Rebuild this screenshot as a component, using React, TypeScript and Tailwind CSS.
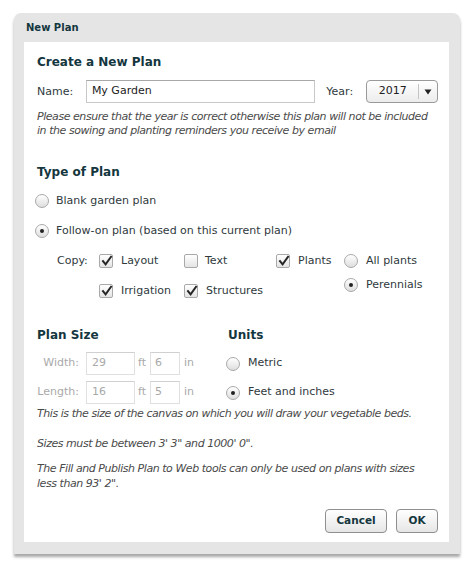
import React from "react";

const font = { fontFamily: '"DejaVu Sans", Verdana, sans-serif' };

function Check({ checked }: { checked?: boolean }) {
  return (
    <span className="relative inline-block w-[14px] h-[14px] shrink-0 rounded-[2px] border border-[#a9a9a9] bg-gradient-to-b from-[#ffffff] to-[#e4e4e4]">
      {checked && (
        <svg viewBox="0 0 14 14" className="absolute left-[0px] top-[-1px] w-[14px] h-[14px]">
          <path d="M3 7.2 L5.6 10.4 L11 2.8" fill="none" stroke="#262626" strokeWidth="2" strokeLinecap="square" />
        </svg>
      )}
    </span>
  );
}

function Radio({ checked }: { checked?: boolean }) {
  return (
    <span className="relative inline-flex items-center justify-center w-[14px] h-[14px] shrink-0 rounded-full border border-[#a9a9a9] bg-gradient-to-b from-[#ffffff] to-[#dedede]">
      {checked && <span className="block w-[4px] h-[4px] rounded-full bg-[#222]" />}
    </span>
  );
}

export default function App() {
  return (
    <div className="w-[471px] h-[569px] bg-white text-[11px] text-[#303a3d]" style={font}>
      <div className="pt-[13px] pl-[14px]">
        <div className="w-[446px] bg-[#e5e5e5] rounded-t-[7px] shadow-[0_3px_3px_rgba(0,0,0,0.35)] pb-[12px]">
          <div className="h-[29px] pl-[12px] flex items-center font-bold text-[10px] text-[#14363e]">New Plan</div>
          <div className="ml-[10px] w-[425px] bg-white pl-[13px] pr-[11px] pt-[10px] pb-[9px]">
            <div className="h-[20px] flex items-center font-bold text-[12px] text-[#14363e]">Create a New Plan</div>
            <div className="mt-[8px] h-[23px] flex items-center">
              <span className="w-[49px] pt-[2px]">Name:</span>
              <div className="w-[230px] h-[23px] border border-[#c8c8c8] border-t-[#a8a8a8] px-[5px] flex items-center text-[#222]">My Garden</div>
              <span className="ml-[11px] w-[40px] pt-[2px]">Year:</span>
              <div className="w-[72px] h-[23px] rounded-[4px] border border-[#9a9a9a] bg-gradient-to-b from-[#ffffff] to-[#ececec] flex items-center">
                <span className="w-[51px] text-center text-[#222]">2017</span>
                <span className="h-[15px] w-px bg-[#c4c4c4]" />
                <span className="flex-1 flex justify-center">
                  <svg width="8" height="6" viewBox="0 0 8 6"><path d="M0.5 0.5 L7.5 0.5 L4 5.5 Z" fill="#222" /></svg>
                </span>
              </div>
            </div>
            <div className="mt-[7px] italic leading-[14px] text-[#4a4a4a] whitespace-nowrap tracking-[-0.45px]">
              Please ensure that the year is correct otherwise this plan will not be included
              <br />
              in the sowing and planting reminders you receive by email
            </div>

            <div className="mt-[24px] h-[20px] flex items-center font-bold text-[12px] text-[#14363e]">Type of Plan</div>
            <div className="mt-[9px] h-[20px] flex items-center -ml-[2px]">
              <Radio />
              <span className="ml-[7px]">Blank garden plan</span>
            </div>
            <div className="mt-[10px] h-[20px] flex items-center -ml-[2px]">
              <Radio checked />
              <span className="ml-[7px]">Follow-on plan (based on this current plan)</span>
            </div>

            <div className="mt-[10px] flex">
              <div className="w-[62px] pl-[20px] h-[20px] flex items-center">Copy:</div>
              <div className="grid grid-cols-[85px_92px_68px] gap-y-[10px]">
                <div className="h-[20px] flex items-center"><Check checked /><span className="ml-[8px]">Layout</span></div>
                <div className="h-[20px] flex items-center"><Check /><span className="ml-[7px]">Text</span></div>
                <div className="h-[20px] flex items-center"><Check checked /><span className="ml-[8px]">Plants</span></div>
                <div className="h-[20px] flex items-center"><Check checked /><span className="ml-[8px]">Irrigation</span></div>
                <div className="h-[20px] flex items-center"><Check checked /><span className="ml-[8px]">Structures</span></div>
              </div>
              <div className="flex flex-col gap-y-[4px]">
                <div className="h-[20px] flex items-center"><Radio /><span className="ml-[8px]">All plants</span></div>
                <div className="h-[20px] flex items-center"><Radio checked /><span className="ml-[8px]">Perennials</span></div>
              </div>
            </div>

            <div className="mt-[24px] flex">
              <div className="w-[191px]">
                <div className="h-[20px] flex items-center font-bold text-[12px] text-[#14363e]">Plan Size</div>
                <div className="mt-[7px] h-[23px] flex items-center text-[#a9a9a9]">
                  <span className="w-[42px] text-right">Width:</span>
                  <div className="ml-[7px] w-[49px] h-[23px] border border-[#e0e0e0] border-t-[#d0d0d0] px-[5px] flex items-center">29</div>
                  <span className="ml-[3px] w-[12px]">ft</span>
                  <div className="w-[30px] h-[23px] border border-[#e0e0e0] border-t-[#d0d0d0] px-[4px] flex items-center">6</div>
                  <span className="ml-[4px]">in</span>
                </div>
                <div className="mt-[6px] h-[23px] flex items-center text-[#a9a9a9]">
                  <span className="w-[42px] text-right">Length:</span>
                  <div className="ml-[7px] w-[49px] h-[23px] border border-[#e0e0e0] border-t-[#d0d0d0] px-[5px] flex items-center">16</div>
                  <span className="ml-[3px] w-[12px]">ft</span>
                  <div className="w-[30px] h-[23px] border border-[#e0e0e0] border-t-[#d0d0d0] px-[4px] flex items-center">5</div>
                  <span className="ml-[4px]">in</span>
                </div>
              </div>
              <div>
                <div className="h-[20px] flex items-center font-bold text-[12px] text-[#14363e]">Units</div>
                <div className="mt-[7px] h-[23px] flex items-center -ml-[2px]"><Radio /><span className="ml-[8px]">Metric</span></div>
                <div className="mt-[6px] h-[23px] flex items-center -ml-[2px]"><Radio checked /><span className="ml-[8px]">Feet and inches</span></div>
              </div>
            </div>

            <div className="mt-[3px] italic leading-[14px] text-[#4a4a4a] whitespace-nowrap tracking-[-0.45px]">This is the size of the canvas on which you will draw your vegetable beds.</div>
            <div className="mt-[16px] italic leading-[14px] text-[#4a4a4a] whitespace-nowrap tracking-[-0.45px]">Sizes must be between 3' 3" and 1000' 0".</div>
            <div className="mt-[10px] italic leading-[15px] text-[#4a4a4a] whitespace-nowrap tracking-[-0.45px]">
              The Fill and Publish Plan to Web tools can only be used on plans with sizes
              <br />
              less than 93' 2".
            </div>

            <div className="mt-[18px] flex justify-end gap-[9px]">
              <button className="w-[62px] h-[24px] rounded-[4px] border border-[#8f8f8f] bg-gradient-to-b from-[#ffffff] to-[#e6e6e6] font-bold text-[10.5px] text-[#14363e]">Cancel</button>
              <button className="w-[42px] h-[24px] rounded-[4px] border border-[#8f8f8f] bg-gradient-to-b from-[#ffffff] to-[#e6e6e6] font-bold text-[10.5px] text-[#14363e]">OK</button>
            </div>
          </div>
        </div>
      </div>
    </div>
  );
}
